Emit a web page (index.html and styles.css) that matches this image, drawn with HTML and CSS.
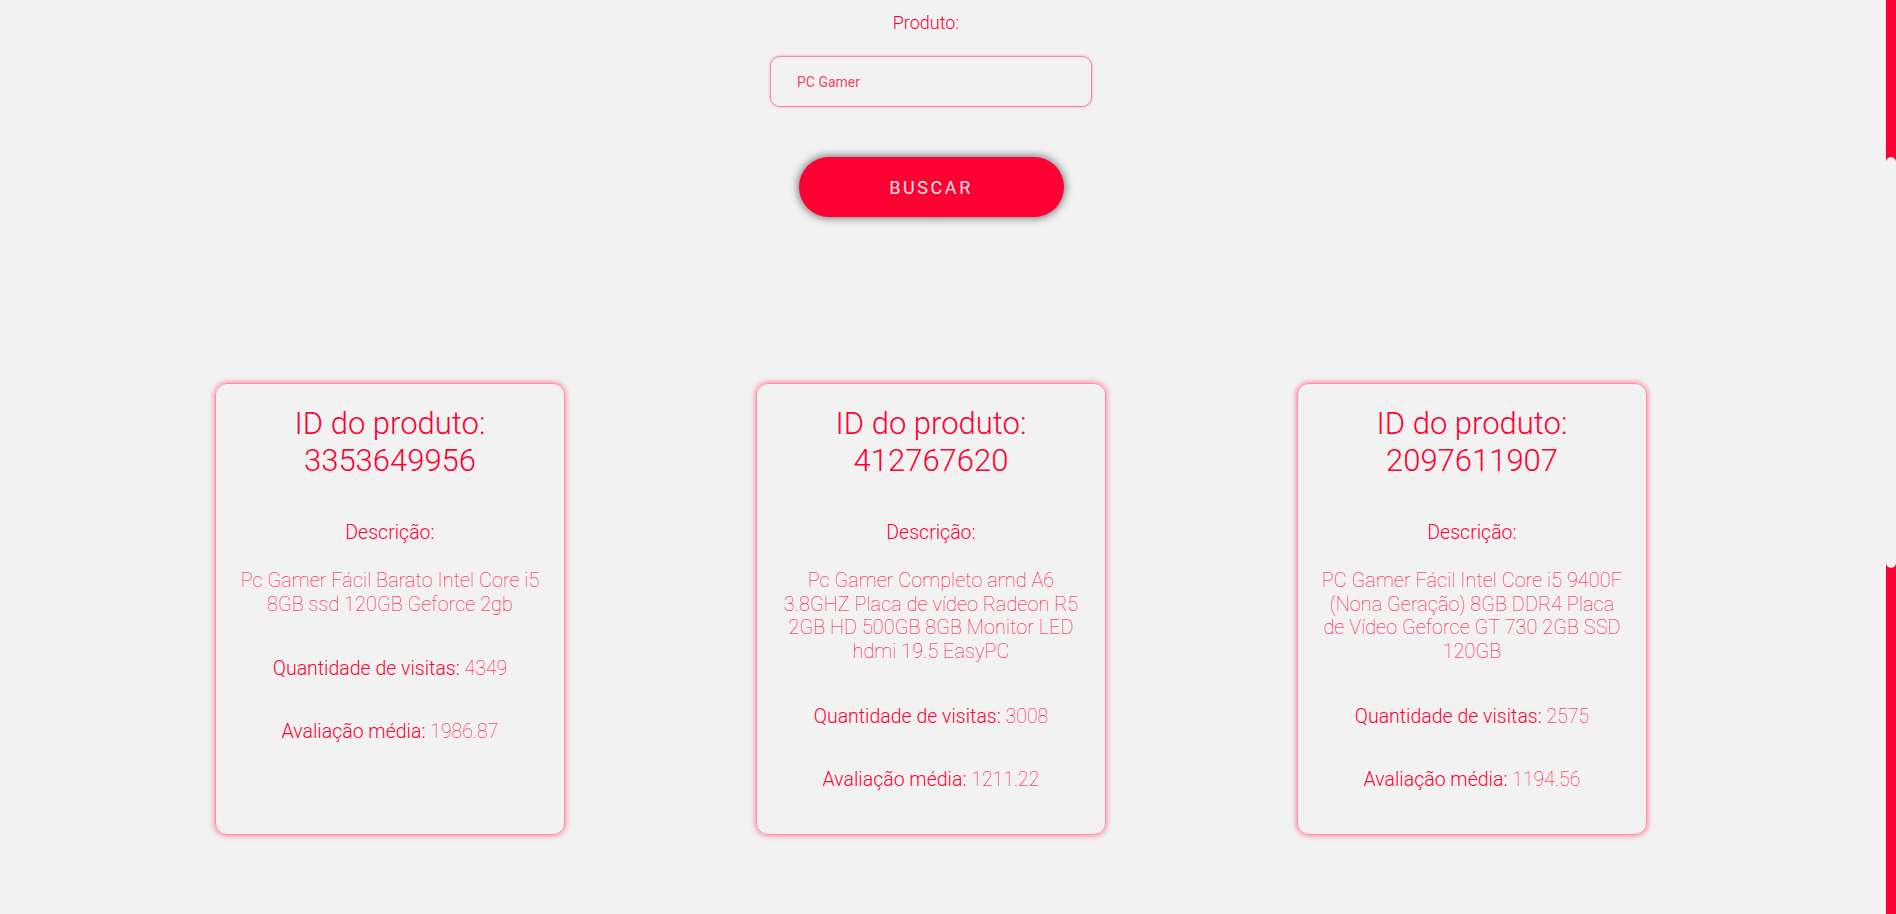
FILE: index.html
```html
<!DOCTYPE html>
<html lang="pt-BR">
<head>
<meta charset="utf-8">
<title>Busca de produtos</title>
<link rel="stylesheet" href="styles.css">
</head>
<body>
<main class="page">
  <form class="search">
    <label class="search-label" for="produto">Produto:</label>
    <input class="search-input" id="produto" type="text" value="PC Gamer">
    <button class="search-btn" type="button">BUSCAR</button>
  </form>
  <section class="cards">
    <article class="card">
      <h2 class="card-title">ID do produto:<br>3353649956</h2>
      <h3 class="card-label">Descrição:</h3>
      <p class="card-desc">Pc Gamer Fácil Barato Intel Core i5 8GB ssd 120GB Geforce 2gb</p>
      <p class="card-stat first">Quantidade de visitas: <span class="val">4349</span></p>
      <p class="card-stat">Avaliação média: <span class="val">1986.87</span></p>
    </article>
    <article class="card">
      <h2 class="card-title">ID do produto:<br>412767620</h2>
      <h3 class="card-label">Descrição:</h3>
      <p class="card-desc">Pc Gamer Completo amd A6 3.8GHZ Placa de vídeo Radeon R5 2GB HD 500GB 8GB Monitor LED hdmi 19.5 EasyPC</p>
      <p class="card-stat first">Quantidade de visitas: <span class="val">3008</span></p>
      <p class="card-stat">Avaliação média: <span class="val">1211.22</span></p>
    </article>
    <article class="card">
      <h2 class="card-title">ID do produto:<br>2097611907</h2>
      <h3 class="card-label">Descrição:</h3>
      <p class="card-desc">PC Gamer Fácil Intel Core i5 9400F (Nona Geração) 8GB DDR4 Placa de Vídeo Geforce GT 730 2GB SSD 120GB</p>
      <p class="card-stat first">Quantidade de visitas: <span class="val">2575</span></p>
      <p class="card-stat">Avaliação média: <span class="val">1194.56</span></p>
    </article>
  </section>
</main>
<div class="scrollbar"><div class="scroll-thumb"></div></div>
</body>
</html>
```
FILE: styles.css
```css
* { box-sizing: border-box; }
html, body { margin: 0; padding: 0; }
body {
  background: #f2f2f2;
  font-family: Roboto, "Liberation Sans", sans-serif;
  color: #ff0033;
  overflow: hidden;
  height: 914px;
}
.page {
  width: 1862px;
}
.search {
  display: flex;
  flex-direction: column;
  align-items: center;
}
.search-label {
  margin-top: 12px;
  padding-right: 10px;
  font-size: 18px;
  line-height: 21px;
  font-weight: 300;
  color: #ff0033;
}
.search-input {
  margin-top: 23px;
  width: 322px;
  height: 51px;
  border: 1px solid #f7889e;
  box-shadow: 0 0 3px rgba(247, 136, 158, 0.8);
  border-radius: 10px;
  background: #f2f2f2;
  padding: 0 0 0 26px;
  font-family: Roboto, "Liberation Sans", sans-serif;
  font-size: 14px;
  color: #f2456a;
  outline: none;
}
.search-btn {
  margin-top: 50px;
  width: 265px;
  height: 60px;
  border: none;
  border-radius: 30px;
  background: #ff0033;
  box-shadow: 0 0 8px 1px rgba(0, 0, 0, 0.55);
  color: #f6e6ea;
  font-family: Roboto, "Liberation Sans", sans-serif;
  font-size: 18px;
  letter-spacing: 2.6px;
  font-weight: 400;
  padding: 0;
}
.cards {
  margin-top: 166px;
  display: flex;
  justify-content: center;
  align-items: stretch;
  gap: 191px;
}
.card {
  width: 350px;
  border: 1px solid #ff8fa3;
  box-shadow: 0 0 5px 1px rgba(255, 110, 140, 0.8);
  border-radius: 12px;
  padding: 21px 20px 42px;
  text-align: center;
}
.card-title {
  margin: 0;
  font-size: 31px;
  line-height: 37px;
  font-weight: 300;
}
.card-label {
  margin: 42px 0 0;
  font-size: 19.5px;
  line-height: 24px;
  font-weight: 300;
}
.card-desc {
  margin: 24px 0 0;
  font-size: 20px;
  line-height: 23.7px;
  font-weight: 100;
}
.card-stat {
  margin: 39px 0 0;
  font-size: 19.5px;
  line-height: 24px;
  font-weight: 300;
}
.card-stat.first { margin-top: 41px; }
.val { font-weight: 100; }
.scrollbar {
  position: fixed;
  top: 0;
  right: 0;
  width: 10px;
  height: 914px;
  background: #ff0033;
}
.scroll-thumb {
  margin-top: 157px;
  height: 411px;
  background: #f2f2f2;
  border-radius: 5px;
}
```
